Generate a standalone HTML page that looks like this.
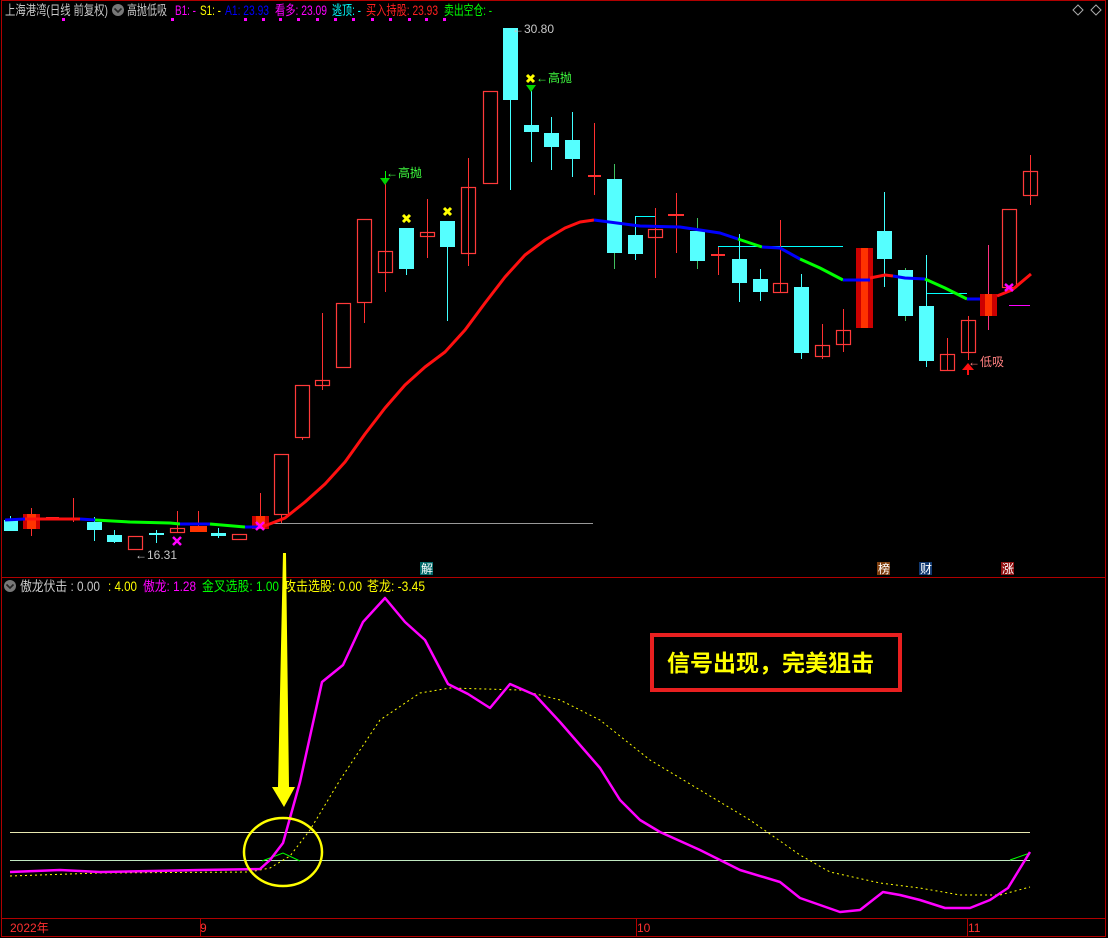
<!DOCTYPE html>
<html><head><meta charset="utf-8"><style>
html,body{margin:0;padding:0;background:#000;}
svg{display:block;}
text{font-family:"Liberation Sans","Noto Sans CJK SC",sans-serif;}
</style></head><body>
<svg width="1108" height="938" viewBox="0 0 1108 938" xmlns="http://www.w3.org/2000/svg">
<rect width="1108" height="938" fill="#000"/>
<g stroke="#b00000" stroke-width="1" fill="none">
<rect x="1.5" y="0.5" width="1104" height="936"/>
<line x1="1" y1="577.5" x2="1106" y2="577.5"/>
<line x1="1" y1="918.5" x2="1106" y2="918.5"/>
<line x1="200.5" y1="919" x2="200.5" y2="936"/>
<line x1="636.5" y1="919" x2="636.5" y2="936"/>
<line x1="967.5" y1="919" x2="967.5" y2="936"/>
</g>
<g font-size="13.5">
<text x="5" y="15" fill="#c8c8c8" textLength="103" lengthAdjust="spacingAndGlyphs">上海港湾(日线 前复权)</text>
<text x="127" y="15" fill="#c8c8c8" textLength="40" lengthAdjust="spacingAndGlyphs">高抛低吸</text>
<text x="175" y="15" fill="#ff00ff" textLength="21" lengthAdjust="spacingAndGlyphs">B1: -</text>
<text x="200" y="15" fill="#ffff00" textLength="21" lengthAdjust="spacingAndGlyphs">S1: -</text>
<text x="225" y="15" fill="#0000ff" textLength="44" lengthAdjust="spacingAndGlyphs">A1: 23.93</text>
<text x="275" y="15" fill="#ff00ff" textLength="52" lengthAdjust="spacingAndGlyphs">看多: 23.09</text>
<text x="332" y="15" fill="#00ffff" textLength="29" lengthAdjust="spacingAndGlyphs">逃顶: -</text>
<text x="366" y="15" fill="#ff2020" textLength="72" lengthAdjust="spacingAndGlyphs">买入持股: 23.93</text>
<text x="444" y="15" fill="#00ff00" textLength="48" lengthAdjust="spacingAndGlyphs">卖出空仓: -</text>
</g>
<circle cx="118" cy="10" r="6" fill="#777"/>
<path d="M114.5 8.5 L118 12 L121.5 8.5" stroke="#222" stroke-width="1.6" fill="none"/>
<g fill="none" stroke="#aaa"><path d="M1078 5 L1083 10 L1078 15 L1073 10Z"/><path d="M1096 5 L1101 10 L1096 15 L1091 10Z"/></g>
<g fill="#ff00ff">
<rect x="62" y="18" width="3" height="3"/><rect x="171" y="18" width="3" height="3"/><rect x="244" y="18" width="3" height="3"/><rect x="262" y="18" width="3" height="3"/><rect x="279" y="18" width="3" height="3"/><rect x="297" y="18" width="3" height="3"/><rect x="316" y="18" width="3" height="3"/><rect x="334" y="18" width="3" height="3"/><rect x="352" y="18" width="3" height="3"/><rect x="371" y="18" width="3" height="3"/><rect x="389" y="18" width="3" height="3"/><rect x="408" y="18" width="3" height="3"/><rect x="425" y="18" width="3" height="3"/><rect x="443" y="18" width="3" height="3"/>
</g>
<line x1="262" y1="523.5" x2="593" y2="523.5" stroke="#999" stroke-width="1"/>
<line x1="635" y1="216.5" x2="655" y2="216.5" stroke="#00ffff"/>
<line x1="718" y1="246.5" x2="843" y2="246.5" stroke="#00ffff"/>
<line x1="927" y1="293.5" x2="967" y2="293.5" stroke="#00ffff"/>
<line x1="1009" y1="305.5" x2="1030" y2="305.5" stroke="#ff00ff"/>
<g stroke-width="1">
<g stroke="#ff3030">
<line x1="31.5" y1="508" x2="31.5" y2="536"/><line x1="73.5" y1="498" x2="73.5" y2="522"/><line x1="177.5" y1="511" x2="177.5" y2="532"/><line x1="198.5" y1="511" x2="198.5" y2="532"/><line x1="260.5" y1="493" x2="260.5" y2="529"/><line x1="281.5" y1="514" x2="281.5" y2="523"/><line x1="302.5" y1="437" x2="302.5" y2="440"/><line x1="322.5" y1="313" x2="322.5" y2="390"/><line x1="364.5" y1="302" x2="364.5" y2="323"/><line x1="385.5" y1="184" x2="385.5" y2="292"/><line x1="427.5" y1="199" x2="427.5" y2="258"/><line x1="468.5" y1="158" x2="468.5" y2="266"/><line x1="594.5" y1="123" x2="594.5" y2="195"/><line x1="655.5" y1="208" x2="655.5" y2="278"/><line x1="718.5" y1="247" x2="718.5" y2="275"/><line x1="780.5" y1="220" x2="780.5" y2="292"/><line x1="822.5" y1="324" x2="822.5" y2="359"/><line x1="843.5" y1="309" x2="843.5" y2="352"/><line x1="947.5" y1="338" x2="947.5" y2="370"/><line x1="968.5" y1="316" x2="968.5" y2="360"/><line x1="1030.5" y1="155" x2="1030.5" y2="205"/><line x1="676.5" y1="193" x2="676.5" y2="253"/>
</g>
<g stroke="#ff3080"><line x1="988.5" y1="245" x2="988.5" y2="330"/></g>
<g stroke="#40ffff">
<line x1="10.5" y1="516" x2="10.5" y2="531"/><line x1="94.5" y1="517" x2="94.5" y2="541"/><line x1="114.5" y1="530" x2="114.5" y2="543"/><line x1="156.5" y1="530" x2="156.5" y2="543"/><line x1="218.5" y1="528" x2="218.5" y2="538"/><line x1="406.5" y1="265" x2="406.5" y2="275"/><line x1="447.5" y1="221" x2="447.5" y2="321"/><line x1="510.5" y1="28" x2="510.5" y2="190"/><line x1="531.5" y1="91" x2="531.5" y2="162"/><line x1="551.5" y1="117" x2="551.5" y2="170"/><line x1="572.5" y1="112" x2="572.5" y2="177"/><line x1="635.5" y1="216" x2="635.5" y2="260"/><line x1="739.5" y1="234" x2="739.5" y2="302"/><line x1="760.5" y1="269" x2="760.5" y2="301"/><line x1="801.5" y1="274" x2="801.5" y2="359"/><line x1="884.5" y1="192" x2="884.5" y2="287"/><line x1="926.5" y1="255" x2="926.5" y2="367"/>
</g>
<g stroke="#40c060"><line x1="614.5" y1="164" x2="614.5" y2="269"/><line x1="697.5" y1="218" x2="697.5" y2="269"/><line x1="905.5" y1="268" x2="905.5" y2="321"/></g>
</g>
<g fill="#55ffff">
<rect x="4" y="520" width="14" height="11"/><rect x="87" y="522" width="15" height="8"/><rect x="107" y="535" width="15" height="7"/><rect x="149" y="533" width="15" height="2"/><rect x="211" y="533" width="15" height="3"/>
<rect x="399" y="228" width="15" height="41"/><rect x="440" y="221" width="15" height="26"/><rect x="503" y="28" width="15" height="72"/><rect x="524" y="125" width="15" height="7"/><rect x="544" y="133" width="15" height="14"/><rect x="565" y="140" width="15" height="19"/>
<rect x="607" y="179" width="15" height="74"/><rect x="628" y="235" width="15" height="19"/><rect x="690" y="231" width="15" height="30"/><rect x="732" y="259" width="15" height="24"/><rect x="753" y="279" width="15" height="13"/><rect x="794" y="287" width="15" height="66"/><rect x="877" y="231" width="15" height="28"/><rect x="898" y="270" width="15" height="46"/><rect x="919" y="306" width="15" height="55"/>
</g>
<g fill="none" stroke="#ff3a3a" stroke-width="1.2">
<rect x="128.5" y="536.5" width="14" height="13"/><rect x="170.5" y="528.5" width="14" height="4"/><rect x="232.5" y="534.5" width="14" height="5"/>
<rect x="274.5" y="454.5" width="14" height="60"/><rect x="295.5" y="385.5" width="14" height="52"/><rect x="315.5" y="380.5" width="14" height="5"/><rect x="336.5" y="303.5" width="14" height="64"/><rect x="357.5" y="219.5" width="14" height="83"/><rect x="378.5" y="251.5" width="14" height="21"/><rect x="420.5" y="232.5" width="14" height="4"/><rect x="461.5" y="187.5" width="14" height="66"/><rect x="483.5" y="91.5" width="14" height="92"/>
<rect x="648.5" y="229.5" width="14" height="8"/><rect x="773.5" y="283.5" width="14" height="9"/><rect x="815.5" y="345.5" width="14" height="11"/><rect x="836.5" y="330.5" width="14" height="14"/><rect x="940.5" y="354.5" width="14" height="16"/><rect x="961.5" y="320.5" width="14" height="32"/><rect x="1002.5" y="209.5" width="14" height="78"/><rect x="1023.5" y="171.5" width="14" height="24"/>
</g>
<g stroke="#ff3030" stroke-width="2">
<line x1="46" y1="518" x2="59" y2="518"/><line x1="66" y1="519" x2="81" y2="519"/><line x1="588" y1="176" x2="601" y2="176"/><line x1="668" y1="215" x2="684" y2="215"/><line x1="711" y1="255" x2="725" y2="255"/>
</g>
<line x1="149" y1="534" x2="164" y2="534" stroke="#55ffff"/>
<g><rect x="23" y="514" width="17" height="15" fill="#ff3300"/><rect x="23" y="514" width="4" height="15" fill="#cc0000"/><rect x="36" y="514" width="4" height="15" fill="#cc0000"/>
<rect x="190" y="526" width="17" height="6" fill="#ff3300"/>
<rect x="252" y="516" width="17" height="13" fill="#ff3300"/><rect x="252" y="516" width="4" height="13" fill="#cc0000"/><rect x="265" y="516" width="4" height="13" fill="#cc0000"/>
<rect x="856" y="248" width="17" height="80" fill="#ff3300"/><rect x="856" y="248" width="5" height="80" fill="#cc0000"/><rect x="868" y="248" width="5" height="80" fill="#cc0000"/>
<rect x="980" y="294" width="17" height="22" fill="#ff3300"/><rect x="980" y="294" width="5" height="22" fill="#cc0000"/><rect x="992" y="294" width="5" height="22" fill="#cc0000"/></g>
<g fill="none" stroke-width="3" stroke-linejoin="round">
<polyline stroke="#0000ff" points="5,520 25,519"/>
<polyline stroke="#ff1010" points="25,519 80,519"/>
<polyline stroke="#0000ff" points="80,519 95,520"/>
<polyline stroke="#00ff00" points="95,520 130,522 170,523 180,524"/>
<polyline stroke="#0000ff" points="180,524 210,524"/>
<polyline stroke="#00ff00" points="210,524 245,527"/>
<polyline stroke="#0000ff" points="245,527 262,527"/>
<polyline stroke="#ff1010" points="262,527 285,518 305,502 325,484 345,462 365,434 385,408 405,385 425,367 445,352 465,330 485,303 505,277 525,255 545,240 565,228 580,222 594,220"/>
<polyline stroke="#0000ff" points="594,220 640,226 680,227 720,233 738,239"/>
<polyline stroke="#00ff00" points="738,239 762,247"/>
<polyline stroke="#0000ff" points="762,247 780,248 800,259"/>
<polyline stroke="#00ff00" points="800,259 820,268 843,280"/>
<polyline stroke="#0000ff" points="843,280 870,280"/>
<polyline stroke="#ff1010" points="870,278 885,275 893,276"/>
<polyline stroke="#0000ff" points="893,276 905,278 925,279"/>
<polyline stroke="#00ff00" points="925,279 945,288 967,299"/>
<polyline stroke="#0000ff" points="967,299 980,299"/>
<polyline stroke="#ff1010" points="997,296 1012,290 1031,274"/>
</g>
<g stroke="#ff00ff" stroke-width="2.5"><path d="M173 537 L181 545 M181 537 L173 545"/><path d="M256 522 L264 530 M264 522 L256 530"/><path d="M1005 284 L1013 291 M1013 284 L1005 291"/></g>
<g stroke="#ffff00" stroke-width="3"><path d="M403 215 L410 222 M410 215 L403 222"/><path d="M444 208 L451 215 M451 208 L444 215"/><path d="M527 75 L534 82 M534 75 L527 82"/></g>
<path d="M380 178 L390 178 L385 185Z" fill="#00d000"/><line x1="385.5" y1="171" x2="385.5" y2="179" stroke="#00ff00"/>
<path d="M526 85 L536 85 L531 92Z" fill="#00d000"/>
<text x="386" y="177" font-size="12" fill="#40ff40">←高抛</text>
<text x="536" y="82" font-size="12" fill="#40ff40">←高抛</text>
<text x="512" y="33" font-size="12" fill="#c8c8c8">←30.80</text>
<text x="135" y="559" font-size="12" fill="#c8c8c8">←16.31</text>
<path d="M962 370 L968 363 L974 370Z" fill="#ff1010"/><line x1="968" y1="368" x2="968" y2="375" stroke="#ff1010" stroke-width="2"/>
<text x="968" y="366" font-size="12" fill="#ff8080">←低吸</text>
<rect x="420" y="562" width="13" height="13" fill="#006868"/><text x="421" y="573" font-size="12" fill="#fff">解</text>
<rect x="877" y="562" width="13" height="13" fill="#804010"/><text x="878" y="573" font-size="12" fill="#fff">榜</text>
<rect x="919" y="562" width="13" height="13" fill="#103870"/><text x="920" y="573" font-size="12" fill="#fff">财</text>
<rect x="1001" y="562" width="13" height="13" fill="#901010"/><text x="1002" y="573" font-size="12" fill="#fff">涨</text>
<circle cx="10" cy="586" r="6" fill="#777"/>
<path d="M6.5 584.5 L10 588 L13.5 584.5" stroke="#222" stroke-width="1.6" fill="none"/>
<g font-size="13.5">
<text x="20" y="591" fill="#c8c8c8" textLength="80" lengthAdjust="spacingAndGlyphs">傲龙伏击 : 0.00</text>
<text x="108" y="591" fill="#ffff00" textLength="29" lengthAdjust="spacingAndGlyphs">: 4.00</text>
<text x="143" y="591" fill="#ff00ff" textLength="53" lengthAdjust="spacingAndGlyphs">傲龙: 1.28</text>
<text x="202" y="591" fill="#00ff00" textLength="77" lengthAdjust="spacingAndGlyphs">金叉选股: 1.00</text>
<text x="284" y="591" fill="#ffff00" textLength="78" lengthAdjust="spacingAndGlyphs">攻击选股: 0.00</text>
<text x="367" y="591" fill="#ffff00" textLength="58" lengthAdjust="spacingAndGlyphs">苍龙: -3.45</text>
</g>
<line x1="10" y1="832.5" x2="1030" y2="832.5" stroke="#e8e8b0"/>
<line x1="10" y1="860.5" x2="1030" y2="860.5" stroke="#c0e8c0"/>
<polyline fill="none" stroke="#00ff00" points="262,861 283,853 300,861"/>
<polyline fill="none" stroke="#00ff00" points="1010,860 1030,853"/>
<polyline fill="none" stroke="#ffff00" stroke-width="1" stroke-dasharray="2,3" points="10,876 100,873 250,872 270,868 290,856 310,830 340,780 380,720 420,693 450,688 520,690 560,700 600,720 650,760 700,790 750,820 800,855 830,872 880,883 920,888 960,895 1000,895 1030,887"/>
<polyline fill="none" stroke="#ff00ff" stroke-width="2.5" stroke-linejoin="round" points="10,872 60,870 100,872 200,870 260,869 270,860 283,843 300,782 322,682 343,665 363,622 385,598 405,622 425,640 448,684 468,694 490,708 510,684 535,695 560,722 580,745 600,768 620,800 640,820 660,832 700,850 740,870 780,882 800,898 820,905 840,912 860,910 883,892 900,895 920,900 945,908 970,908 990,900 1008,888 1030,852"/>
<path d="M283 553 L286 553 L289 787 L295 787 L284 807 L272 787 L278 787Z" fill="#ffff00"/>
<ellipse cx="283" cy="852" rx="39" ry="34" fill="none" stroke="#ffff00" stroke-width="2.5"/>
<rect x="652" y="635" width="248" height="55" fill="none" stroke="#e82020" stroke-width="4"/>
<text x="667" y="671" font-size="23" font-weight="bold" fill="#ffff00" style="font-family:'Noto Sans CJK SC',sans-serif">信号出现，完美狙击</text>
<text x="10" y="932" font-size="12" fill="#ff3030">2022年</text>
<text x="200" y="932" font-size="12" fill="#ff3030">9</text>
<text x="637" y="932" font-size="12" fill="#ff3030">10</text>
<text x="968" y="932" font-size="12" fill="#ff3030">11</text>
</svg>
</body></html>
